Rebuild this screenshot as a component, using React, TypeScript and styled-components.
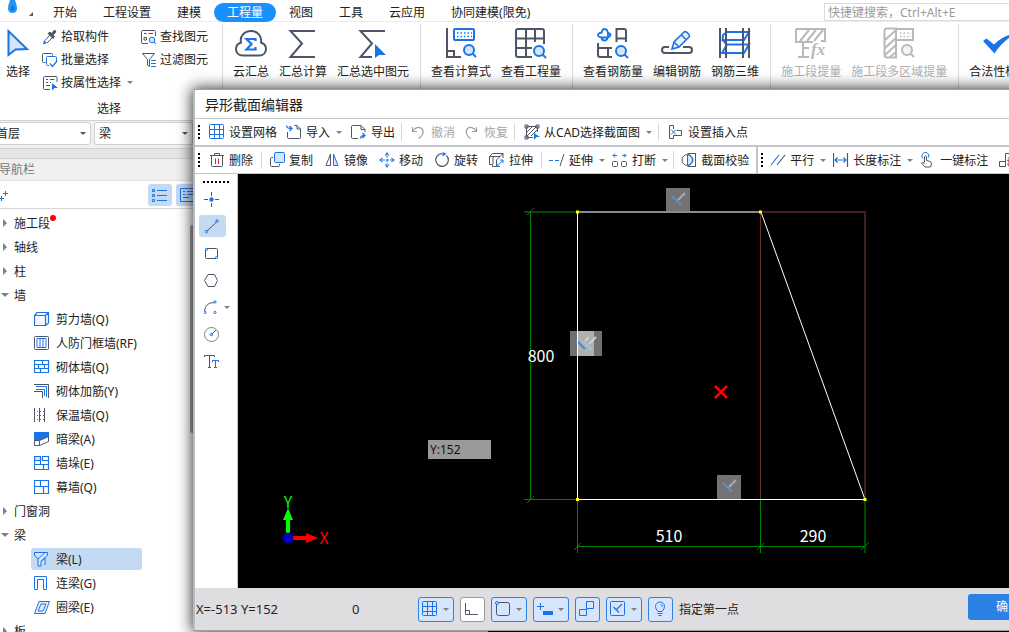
import React from "react";
import styled, { createGlobalStyle, css } from "styled-components";

const DARK = "#4d5566";
const BLUE = "#1a73e8";
const PALE = "#d6e5fb";
const MUTED = "#b9b9b9";
const LINE = "#c3c6cb";

const Global = createGlobalStyle`
  * { box-sizing: border-box; }
  html, body { margin: 0; padding: 0; overflow: hidden; }
  body {
    font-family: "Noto Sans", "Noto Sans CJK SC", sans-serif;
    font-size: 12px;
    line-height: 16px;
    color: #222;
  }
  button, input, select { font: inherit; color: inherit; }
  button { margin: 0; padding: 0; border: 0; background: none; white-space: nowrap; cursor: pointer; }
  ul { margin: 0; padding: 0; list-style: none; }
`;

/* ---------- shell ---------- */

const Shell = styled.div`
  position: relative;
  display: flex;
  flex-direction: column;
  width: 100%;
  min-width: 1064px;
  height: 100vh;
  overflow: hidden;
  background: #fff;
`;

const Label = styled.span`
  padding-top: 2px;
`;

const MenuBar = styled.header`
  display: flex;
  align-items: center;
  flex: none;
  height: 22px;
  padding-top: 3px;
  border-bottom: 1px solid #ececec;
`;

const Logo = styled.div`
  align-self: flex-start;
  width: 40px;
  height: 18px;
  flex: none;
  margin-top: -3px;
`;

const MenuItem = styled.button<{ $active?: boolean }>`
  height: 19px;
  padding: 0 13px;
  border-radius: 10px;
  line-height: 19px;
  ${(p) => p.$active && css`background: #1890ff; color: #fff;`}
`;

const Search = styled.input`
  width: 236px;
  height: 18px;
  margin: 0 4px 0 auto;
  padding: 0 3px;
  border: 1px solid #dcdcdc;
  background: #fff;
  outline: none;
  &::placeholder { color: #9a9a9a; opacity: 1; }
`;

const Ribbon = styled.div`
  display: flex;
  flex: none;
  height: 98px;
  padding-top: 2px;
  overflow: hidden;
`;

const Group = styled.div`
  display: flex;
  align-items: flex-start;
  gap: 10px;
  flex: none;
  padding: 3px 11px 0 10px;
  border-right: 1px solid #dcdcdc;
  &:last-child { border-right: 0; }
`;

const BigTool = styled.button<{ $muted?: boolean }>`
  display: flex;
  flex-direction: column;
  align-items: center;
  gap: 5px;
  color: ${(p) => (p.$muted ? "#b0b0b0" : "inherit")};
`;

const SelectGroup = styled.div`
  display: flex;
  flex-direction: column;
  align-items: center;
  flex: none;
  width: 223px;
  padding: 1px 4px 0 0;
  border-right: 1px solid #dcdcdc;
`;

const SelectTools = styled.div`
  display: grid;
  grid-template-columns: 36px 99px 70px;
  width: 100%;
  padding-left: 6px;
`;

const PickTool = styled(BigTool)`
  align-items: flex-start;
  gap: 6px;
  padding-top: 1px;
`;

const Stack = styled.div`
  display: flex;
  flex-direction: column;
  align-items: flex-start;
`;

const SmallTool = styled.button`
  display: flex;
  align-items: center;
  gap: 3px;
  height: 23px;
`;

const Caption = styled.div`
  margin-top: 7px;
`;

const Caret = styled.span`
  width: 0;
  height: 0;
  margin-left: 3px;
  border: 3px solid transparent;
  border-top-color: #808080;
  border-bottom: 0;
`;

const Workspace = styled.div`
  display: flex;
  flex: 1;
  min-height: 0;
`;

const Sidebar = styled.aside`
  position: relative;
  display: flex;
  flex-direction: column;
  flex: none;
  width: 193px;
  overflow: hidden;
  background: #fff;
`;

const ListPane = styled.div`
  flex: none;
  width: 295px;
`;

const Backdrop = styled.div`
  flex: 1;
  background: #000;
`;

const Filters = styled.div`
  display: flex;
  align-items: flex-start;
  flex: none;
  gap: 3px;
  height: 29px;
  padding: 1px 0 4px;
  border-top: 1px solid #d2d2d2;
  border-bottom: 1px solid #d2d2d2;
  background: #f0f0f0;
`;

const Picker = styled.label<{ $width: number; $offset?: number }>`
  display: grid;
  align-items: center;
  flex: none;
  width: ${(p) => p.$width}px;
  margin-left: ${(p) => p.$offset || 0}px;
  & > * { grid-area: 1 / 1; }
  &::after {
    content: "";
    grid-area: 1 / 1;
    justify-self: end;
    margin-right: 5px;
    border: 3px solid transparent;
    border-top-color: #555;
    border-bottom: 0;
    pointer-events: none;
  }
`;

const PickerSelect = styled.select`
  appearance: none;
  width: 100%;
  height: 23px;
  padding: 0 12px 0 4px;
  border: 1px solid #d0d0d0;
  border-radius: 3px;
  background: #fff;
`;

const Band = styled.div`
  flex: none;
  height: 10px;
  border-bottom: 1px solid #d2d2d2;
  background: #e5e5e5;
`;

const PaneTitle = styled.h2`
  flex: none;
  height: 22px;
  margin: 0 0 0 -1px;
  border-bottom: 1px solid #e2e2e2;
  background: #f0f0f0;
  color: #777;
  font-size: 12px;
  font-weight: 400;
  line-height: 21px;
`;

const PaneTools = styled.div`
  display: flex;
  align-items: center;
  flex: none;
  gap: 4px;
  height: 28px;
  border-bottom: 1px solid #d8d8d8;
`;

const AddButton = styled.button`
  width: 16px;
  height: 16px;
  margin-right: auto;
`;

const ViewButton = styled.button`
  display: grid;
  place-items: center;
  flex: none;
  width: 24px;
  height: 22px;
  border-radius: 3px;
  background: #c3daf2;
  &:last-child { margin-right: -7px; }
`;

const Tree = styled.ul`
  padding-top: 2px;
`;

const Branch = styled.button`
  display: flex;
  align-items: center;
  height: 24px;
  padding-left: 3px;
`;

const Arrow = styled.span<{ $open?: boolean }>`
  width: 11px;
  &::before {
    content: "";
    display: block;
    width: 0;
    height: 0;
    border: 4px solid transparent;
    ${(p) =>
      p.$open
        ? css`border-width: 4px 4px 0; margin-left: -2px; border-top-color: #808080;`
        : css`border-width: 4px 0 4px 4px; border-left-color: #808080;`}
  }
`;

const Dot = styled.i`
  align-self: flex-start;
  width: 6px;
  height: 6px;
  margin-top: 4px;
  border-radius: 50%;
  background: #f00;
`;

const LeafItem = styled.li`
  display: flex;
  align-items: center;
  height: 24px;
  padding-left: 31px;
`;

const Leaf = styled.button<{ $active?: boolean }>`
  display: flex;
  align-items: center;
  gap: 6px;
  width: 111px;
  height: 22px;
  padding-left: 3px;
  border-radius: 3px;
  background: ${(p) => (p.$active ? "#c3daf2" : "transparent")};
`;

const Thumb = styled.div`
  position: absolute;
  top: 105px;
  right: 0;
  width: 3px;
  height: 208px;
  border-radius: 2px 0 0 2px;
  background: #a8a8a8;
`;

/* ---------- editor window ---------- */

const Dialog = styled.section`
  position: absolute;
  top: 89px;
  left: 193px;
  right: 4px;
  bottom: 1px;
  display: flex;
  flex-direction: column;
  border: 1px solid #9b9da1;
  border-left: 2px solid #b9bbc0;
  background: #fff;
  box-shadow: 0 0 14px 1px rgba(0, 0, 0, 0.8);
`;

const Title = styled.h1`
  flex: none;
  height: 29px;
  margin: 0;
  padding-left: 10px;
  border-bottom: 1px solid ${LINE};
  font-size: 14px;
  font-weight: 400;
  line-height: 29px;
`;

const Bar = styled.div<{ $height: number; $rule: number }>`
  display: flex;
  flex: none;
  height: ${(p) => p.$height}px;
  border-bottom: ${(p) => p.$rule}px solid ${LINE};
`;

const Segment = styled.div<{ $gap: number; $ruled?: boolean }>`
  display: flex;
  align-items: center;
  flex: none;
  gap: ${(p) => p.$gap}px;
  padding: 0 3px;
  ${(p) => p.$ruled && css`border-right: 2px solid ${LINE};`}
`;

const Grip = styled.span<{ $indent?: number }>`
  width: 2px;
  height: 14px;
  margin-right: ${(p) => p.$indent || 0}px;
  background: repeating-linear-gradient(#000 0 2px, transparent 2px 4px);
`;

const Tool = styled.button<{ $muted?: boolean; $pad?: number }>`
  display: flex;
  align-items: center;
  gap: 4px;
  height: 24px;
  padding-right: ${(p) => p.$pad || 0}px;
  color: ${(p) => (p.$muted ? "#a6a6a6" : "inherit")};
`;

const ToolCaret = styled(Caret)`
  margin-left: 2px;
  border-width: 3px 3px 0;
`;

const Sep = styled.span<{ $shift: number }>`
  width: 1px;
  height: 18px;
  margin-left: ${(p) => p.$shift}px;
  background: #d6d8db;
`;

const Body = styled.div`
  display: flex;
  flex: 1;
  min-height: 0;
`;

const Palette = styled.div`
  display: flex;
  flex-direction: column;
  flex: none;
  gap: 5px;
  width: 43px;
  padding: 7px 0 0 4px;
  border-right: 1px solid ${LINE};
`;

const PaletteGrip = styled.span`
  width: 26px;
  height: 2px;
  margin-left: 4px;
  background: repeating-linear-gradient(90deg, #000 0 2px, transparent 2px 4px);
`;

const PaletteTool = styled.button<{ $active?: boolean }>`
  display: flex;
  align-items: center;
  height: 22px;
  width: ${(p) => (p.$active ? 27 : 36)}px;
  padding-left: 5px;
  gap: 2px;
  border-radius: 3px;
  background: ${(p) => (p.$active ? "#c3daf2" : "transparent")};
`;

const Canvas = styled.div`
  position: relative;
  flex: 1;
  min-width: 0;
  overflow: hidden;
  background: #000;
`;

const Readout = styled.output`
  position: absolute;
  top: 266px;
  left: 190px;
  width: 63px;
  height: 19px;
  padding-left: 2px;
  background: #999;
  color: #111;
  line-height: 19px;
`;

const Drawing = styled.svg`
  display: block;
`;

const Status = styled.footer`
  display: flex;
  align-items: center;
  flex: none;
  gap: 6px;
  height: 42px;
  padding-right: 11px;
  background: #dedee0;
`;

const Coords = styled.span`
  width: 151px;
  padding-left: 1px;
  font-size: 13px;
`;

const Count = styled.span`
  width: 60px;
  font-size: 13px;
`;

const Toggle = styled.button<{ $off?: boolean; $menu?: boolean }>`
  display: flex;
  align-items: center;
  gap: 3px;
  flex: none;
  width: ${(p) => (p.$menu ? 36 : 25)}px;
  height: 25px;
  padding-left: 3px;
  border: 1px solid ${(p) => (p.$off ? "#9a9a9a" : "#2d82ea")};
  border-radius: 3px;
  background: ${(p) => (p.$off ? "#fff" : PALE)};
`;

const Confirm = styled.button`
  width: 80px;
  height: 26px;
  margin: 0 0 4px auto;
  border-radius: 3px;
  background: #2d80e4;
  color: #fff;
`;

/* ---------- icons ---------- */

const P = ({ d, c = DARK, w = 1, f = "none" }: { d: string; c?: string; w?: number; f?: string }) => (
  <path d={d} stroke={c} strokeWidth={w} fill={f} />
);

const IconSvg = styled.svg`
  display: block;
  flex: none;
`;

const Icon = ({ size = 16, children }: { size?: number; children: React.ReactNode }) => (
  <IconSvg width={size} height={size} viewBox={`0 0 ${size} ${size}`} fill="none" aria-hidden="true">
    {children}
  </IconSvg>
);

const Lens = ({ x, y, c = BLUE, f = PALE }: { x: number; y: number; c?: string; f?: string }) => (
  <>
    <circle cx={x} cy={y} r="5" stroke={c} strokeWidth="2" fill={f} />
    <path d={`M${x + 3.5} ${y + 3.5}l3.5 3.5`} stroke={c} strokeWidth="2" />
  </>
);

const big: Record<string, React.ReactNode> = {
  cloud: (
    <>
      <P d="M8 28.500C3.500 28.500 1 25.500 1 22C1 18.500 3 16.500 6 15.500C4.500 9 9.500 4 16 4C22.500 4 27 9 26 15.500C29 16.500 31 18.500 31 22C31 25.500 28.500 28.500 24 28.500Z" w={2} />
      <P d="M20.500 14V12H11.500L16.500 17L11.500 22.500H20.500V20" c={BLUE} w={2.2} />
    </>
  ),
  sum: <P d="M28 4H3.500L15 16.500L3.500 30H28" w={2} />,
  sumPick: (
    <>
      <P d="M28 4H3.500L15 16.500L3.500 30H15" w={2} />
      <path d="M18 17V31L22 28H29Z" fill={BLUE} />
    </>
  ),
  formula: (
    <>
      <P d="M2 1V30H16M2 24H9V30" w={2} />
      <rect x="9" y="2" width="20" height="11" rx="1" stroke={BLUE} strokeWidth="2" />
      <path d="M12 6H27M12 9.500H27" stroke={BLUE} strokeWidth="1.500" strokeDasharray="1.500 2" />
      <Lens x={24} y={23} />
    </>
  ),
  quantity: (
    <>
      <P d="M17 30H3Q1 30 1 28V4Q1 2 3 2H27Q29 2 29 4V17M11 2V30M20 2V15M1 11.500H29M1 21H17" w={2} />
      <Lens x={24} y={24} />
    </>
  ),
  rebar: (
    <>
      <P d="M4.500 6.500Q5 2 7.500 2Q11 2 11 8Q11 13.500 7.500 13.500Q5 13.500 4.500 11M5 5.500Q1 6 1 8Q1 10.500 7 10.500Q13 10.500 13.500 8Q13.500 6.500 11 6" c={BLUE} w={1.8} />
      <P d="M19.500 15V2H27Q29 2 29 4V15M19.500 11.500H29M1 16V28Q1 30 3 30H15M1 21H15M11 21V30" w={2} />
      <Lens x={24} y={24} />
    </>
  ),
  edit: (
    <>
      <P d="M8 20H4Q1 20 1 23T4 26H28Q31 26 31 23T28 20H22" w={2} />
      <P d="M11 22L13 15L23 5Q24.500 4 26 5.500L28 7.500Q29 9 28 10L18 20ZM20.500 8L25 12.500M13 15L18 20" c={BLUE} w={1.6} f="#eaf2fe" />
    </>
  ),
  solid: (
    <>
      <P d="M4 8L8 5H30L25 13H3.500ZM3.500 13L8 17.500H30L25 26H3L8 17.500" c={BLUE} w={2} />
      <P d="M1 1V31M7 1V31M24 1V31M30 1V31" w={2} />
    </>
  ),
  section: (
    <>
      <P d="M1 2H30V14H26M1 2V15H18M5 14L14 3M12 14L21 3M19 14L28 3M8 15V30M3 30H14M8 21H14" c={MUTED} w={2} />
      <text x="16" y="28" fontFamily="Liberation Serif" fontStyle="italic" fontWeight="700" fontSize="17" fill={MUTED}>fx</text>
    </>
  ),
  region: (
    <>
      <P d="M13 1.500H4Q1.500 1.500 1.500 4V28Q1.500 30.500 4 30.500H13ZM13 2H30V13H14M2 13L13 3M2 21L13 11M2 28L13 18M7 30L13 25" c={MUTED} w={2} />
      <path d="M17 6H28M17 9.500H28" stroke={MUTED} strokeWidth="1.500" strokeDasharray="1.500 2" />
      <Lens x={24} y={23} c={MUTED} f="#f4f4f4" />
    </>
  ),
  check: <path d="M0 14L3.500 11.500L11 17.500Q19 10 28 7.500L29 9Q18 16 11.500 26.500Z" fill={BLUE} />,
};

const small: Record<string, React.ReactNode> = {
  dropper: (
    <>
      <path d="M8 3L12.500 7.500L11 9.500L6 4.500ZM10 4L12 1.500Q14.500 1 13.500 3.500L11.500 5.500Z" fill={DARK} stroke={DARK} />
      <P d="M8 6L3 11.500M10.500 8.500L5 14" />
      <path d="M2 11L5 14L1 15.500Z" fill={BLUE} />
    </>
  ),
  batch: (
    <>
      <P d="M3.500 10.500H1.500Q0.500 10.500 0.500 9.500V2.500Q0.500 1.500 1.500 1.500H9.500Q10.500 1.500 10.500 2.500V3.500" />
      <P d="M14.500 9V5.500Q14.500 4.500 13.500 4.500H5.500Q4.500 4.500 4.500 5.500V12.500Q4.500 13.500 5.500 13.500H7" c={BLUE} />
      <P d="M8 11.500L10.500 14.500L15 9" c={BLUE} w={1.3} />
    </>
  ),
  attr: (
    <>
      <P d="M15 7V2.500Q15 1.500 14 1.500H2.500Q1.500 1.500 1.500 2.500V13.500Q1.500 14.500 2.500 14.500H8M4 4.500H6M8 4.500H12.500M4 7.500H6M8 7.500H9M4 10.500H8" />
      <path d="M10 8L16 13L12.500 13L10 15.500Z" fill={BLUE} />
    </>
  ),
  find: (
    <>
      <P d="M14.500 7V2.500Q14.500 1.500 13.500 1.500H1.500Q0.500 1.500 0.500 2.500V13.500Q0.500 14.500 1.500 14.500H7M3 4.500H5.500M7.500 4.500H12M3 8.500H5.500V11H3Z" />
      <circle cx="11" cy="11" r="2.800" stroke={BLUE} fill={PALE} />
      <P d="M13 13L15 15" c={BLUE} />
    </>
  ),
  filter: (
    <>
      <P d="M8.500 14.500L6.500 13V7.500L1.500 1.500H13.500L8.500 7.500Z" />
      <P d="M10 8.500H15M10 11.500H15M10 14.500H15" c={BLUE} />
    </>
  ),
  grid: (
    <>
      <rect x="0.500" y="0.500" width="14" height="14" rx="1" stroke={BLUE} />
      <P d="M5.500 0V15M10.500 0V15M0 5.500H15M0 10.500H15" c={BLUE} />
    </>
  ),
  importIn: (
    <>
      <P d="M8.500 1.500H11L14.500 5V13.500Q14.500 14.500 13.500 14.500H2.500Q1.500 14.500 1.500 13.500V8M11 1.500V5H14.500" />
      <P d="M0.500 1.500Q0.500 4.500 5.500 4.500M3.500 2L6 4.500L3.500 7" c={BLUE} w={1.3} />
    </>
  ),
  exportOut: (
    <>
      <P d="M7 14.500H1.500Q0.500 14.500 0.500 13.500V2.500Q0.500 1.500 1.500 1.500H10L14 5.500V8M10 1.500V5.500H14" />
      <P d="M9.500 14.500Q9.500 11.500 14 11.500M11.500 9L14 11.500L11.500 14" c={BLUE} w={1.3} />
    </>
  ),
  undo: <P d="M1.500 3V7.500H6M1.500 7.500C4 3 8 2.500 10.500 4.500C14 8 11.500 12 7.500 14.500" c="#a0a0a0" w={1.2} />,
  redo: <P d="M12.500 3V7.500H8M12.500 7.500C10 3 6 2.500 3.500 4.500C0.500 8 3 12 6.500 14.500" c="#a0a0a0" w={1.2} />,
  cad: (
    <>
      <P d="M2.500 2.500H13.500V8M2.500 2.500V13.500H9M1 1H4V4H1ZM12 1H15V4H12ZM1 12H4V15H1ZM3 8L8 3M3 12L12 3M7 12L13 6" />
      <path d="M10 9L16 13H12.500L10 16Z" fill={BLUE} />
    </>
  ),
  insert: (
    <>
      <P d="M5.500 5V1.500H1.500V14.500H5.500V11.500H13.500V6.500H9" />
      <P d="M3 5.500L8 10.500M8 5.500L3 10.500" c={BLUE} />
    </>
  ),
  trash: (
    <>
      <P d="M1 3.500H15M5.500 3V1.500H10.500V3M2.500 4V13.500Q2.500 14.500 3.500 14.500H12.500Q13.500 14.500 13.500 13.500V4" />
      <P d="M6.500 6.500V12M9.500 6.500V12" c="#e02020" />
    </>
  ),
  copy: (
    <>
      <P d="M4 5.500H2.500Q1.500 5.500 1.500 6.500V13.500Q1.500 14.500 2.500 14.500H9.500Q10.500 14.500 10.500 13.500V12" />
      <rect x="5.500" y="0.500" width="10" height="10" rx="1" stroke={BLUE} fill={PALE} />
    </>
  ),
  mirror: (
    <>
      <P d="M6.500 2V13.500H2Z" />
      <P d="M9.500 2V13.500H14Z" c={BLUE} f={PALE} />
    </>
  ),
  move: (
    <>
      <path d="M8 3V13M3 8H13" stroke={BLUE} strokeDasharray="3 1" />
      <path d="M8 0L10.500 3.500H5.500ZM8 16L10.500 12.500H5.500ZM0 8L3.500 5.500V10.500ZM16 8L12.500 5.500V10.500Z" fill={BLUE} />
      <path d="M8 2L9 3.500H7ZM8 14L9 12.500H7ZM2 8L3.500 7V9ZM14 8L12.500 7V9Z" fill="#fff" />
    </>
  ),
  rotate: (
    <>
      <P d="M12.500 3.500A6.300 6.300 0 1 1 8 1.700" w={1.2} />
      <path d="M8.500 0L12.500 1.700L8.500 4.500Z" fill={BLUE} />
    </>
  ),
  stretch: (
    <>
      <P d="M0.500 4.500L3.500 1.500H14L11 4.500H0.500V12.500H3.500V14.500H7.500V8L11 4.500M4 4.500V12M14 1.500V6" />
      <P d="M8 14.500L14 8M11 8H14V11M8 11.500V14.500H11" c={BLUE} />
    </>
  ),
  extend: (
    <>
      <P d="M0 8.500H4M6 8.500H10" c={BLUE} />
      <P d="M11 14L15 2" />
    </>
  ),
  breakIt: (
    <>
      <rect x="0.500" y="9.500" width="5" height="5" rx="1" stroke={DARK} />
      <rect x="9.500" y="9.500" width="5" height="5" rx="1" stroke={DARK} />
      <P d="M5 3.500H1M3 1.500L1 3.500L3 5.500M10 3.500H14M12 1.500L14 3.500L12 5.500" c={BLUE} />
    </>
  ),
  verify: (
    <>
      <P d="M6.500 1.500H14.500V14.500H6.500" />
      <circle cx="6.500" cy="8" r="5.500" stroke={DARK} fill="#fff" />
      <path d="M6.500 3A5 5 0 0 1 6.500 13Z" fill={PALE} stroke={BLUE} />
    </>
  ),
  parallel: (
    <>
      <P d="M1 13L9 3" c={BLUE} w={1.2} />
      <P d="M7 13L15 3" w={1.2} />
    </>
  ),
  measure: (
    <>
      <P d="M0.500 1V15M14.500 1V15" w={1.2} />
      <P d="M2 8H13M4.500 5.500L2 8L4.500 10.500M10.500 5.500L13 8L10.500 10.500" c={BLUE} w={1.2} />
    </>
  ),
  tap: (
    <>
      <P d="M3 6.500A3.500 3.500 0 1 1 8.500 5.500" c={BLUE} />
      <P d="M4.500 10.500V4.500Q5.500 3 6.500 4.500V8.500L10 9.500Q11.500 10 11.500 12L10.500 15H5L1.500 11Q2 9.500 4.500 11.500" />
    </>
  ),
  combine: (
    <>
      <P d="M0.500 9.500H6.500V14.500H0.500ZM6.500 9.500V1.500H14M10 5V14.500" />
      <P d="M8 8L13 11M8 12L13 14" c="#e02020" />
    </>
  ),
  point: (
    <>
      <P d="M7.500 1V5M7.500 12V16M0 8.500H4M11 8.500H15" />
      <circle cx="7.500" cy="8.500" r="2.200" fill={BLUE} />
    </>
  ),
  line: (
    <>
      <P d="M3 13L12.500 4" />
      <circle cx="2.500" cy="13.500" r="1.200" stroke={BLUE} />
      <circle cx="13" cy="3" r="1.200" stroke={BLUE} />
    </>
  ),
  rect: (
    <>
      <rect x="1.500" y="3.500" width="12" height="10" rx="1" stroke={DARK} />
      <circle cx="2.500" cy="4.500" r="1" stroke={BLUE} fill="#fff" />
      <circle cx="12.500" cy="12.500" r="1" stroke={BLUE} fill="#fff" />
    </>
  ),
  hexagon: <P d="M4 2.500H10.500L13.500 8.500L10.500 14.500H4L0.500 8.500Z" />,
  arc: (
    <>
      <P d="M0.500 12Q1.500 3.500 10 3.500" />
      <circle cx="1" cy="13.500" r="1.100" stroke={BLUE} />
      <circle cx="11" cy="3" r="1.100" stroke={BLUE} />
      <circle cx="11" cy="13.500" r="1.100" stroke={BLUE} />
    </>
  ),
  circle: (
    <>
      <circle cx="7.500" cy="8.500" r="7" stroke="#7b818d" />
      <P d="M7.500 8.500L12 4" />
      <circle cx="7.500" cy="8.500" r="1.200" stroke={BLUE} />
    </>
  ),
  type: (
    <>
      <P d="M0.500 4V2.500H10.500V4M5.500 2.500V14.500M4 14.500H7" />
      <P d="M8.500 9V7.500H14.500V9M11.500 7.500V14.500M10 14.500H13" c={BLUE} />
    </>
  ),
  wall: <P d="M0.500 4.500H11.500V14.500H0.500ZM0.500 4.500L3 1.500H14.500V12L11.500 14.500M11.500 4.500L14.500 1.500" c={BLUE} w={1.2} f="#f4f8ff" />,
  frame: (
    <>
      <rect x="0.500" y="1.500" width="14" height="13" rx="1" stroke={DARK} />
      <P d="M3 12.500V3.500H12V12.500ZM6 3.500V12.500M9 3.500V12.500" c={BLUE} />
    </>
  ),
  brick: <P d="M0.500 1.500H14.500V13.500H0.500ZM0.500 5.500H14.500M0.500 9.500H14.500M8.500 1.500V5.500M4.500 5.500V9.500M10.500 5.500V9.500M6.500 9.500V13.500" c={BLUE} w={1.2} />,
  ties: (
    <>
      <P d="M0 1.500H14.500V15M0 8.500H8.500V15" />
      <P d="M2 3.500H12.500V14M2 6.500H10.500V13" c={BLUE} />
    </>
  ),
  insulation: (
    <>
      <P d="M0.500 1V15M5.500 1V15M10.500 1V15" />
      <path d="M0 4.500H11M0 8.500H11M0 12.500H11" stroke={BLUE} strokeDasharray="1 2" />
    </>
  ),
  hiddenBeam: (
    <>
      <path d="M0 1H15V6L5 10H0Z" fill={BLUE} />
      <P d="M0.500 9.500H5.500V14.500H0.500ZM5.500 9.500L14.500 5.500V10.500L5.500 14.500" f="#fff" />
    </>
  ),
  pier: (
    <>
      <rect x="1" y="1" width="6" height="4" fill={PALE} />
      <P d="M0.500 1.500H6.500V5.500H0.500ZM8.500 1.500H14.500V5.500H8.500ZM0.500 5.500V14.500H14.500V5.500M0.500 9.500H14.500M6.500 5.500V9.500M9.500 9.500V14.500" c={BLUE} w={1.2} />
    </>
  ),
  curtain: <P d="M0.500 1.500H14.500V14.500H0.500ZM0.500 7.500H14.500M6.500 1.500V7.500M9.500 7.500V14.500" c={BLUE} w={1.2} />,
  beam: <P d="M0.500 1.500H13.500V4L7 10.500V15H4V8L0.500 4ZM4 8L11 1.500M7 10.500L11 7V14" c={BLUE} f="#d6e5fb" />,
  link: <P d="M0.500 14.500V1.500H12.500V14.500H9.500V4.500H3.500V14.500Z" c={BLUE} f="#f4f8ff" />,
  ring: <P d="M0.500 14.500L5 2.500H15.500L11 14.500ZM4 12L7 5H12L9 12Z" c={BLUE} f="#e6effc" />,
  list: (
    <>
      <P d="M5 3.500H15M5 8.500H15M5 13.500H15" c={BLUE} />
      <path d="M0.500 2.500H2.500V4.500H0.500ZM0.500 7.500H2.500V9.500H0.500ZM0.500 12.500H2.500V14.500H0.500Z" stroke={BLUE} />
    </>
  ),
  card: <P d="M0.500 1.500H15V14.500H0.500ZM3 4.500H5M7 4.500H14M3 7.500H5M7 7.500H14M3 10.500H9" c={BLUE} />,
  plus: <P d="M0 11.500H4M1.500 9V14M3 6.500H8M5.500 4V9" c={BLUE} />,
  ortho: <P d="M1.500 2V13.500H14M1.500 9.500H5.500V13.500" />,
  snap: (
    <>
      <rect x="1.500" y="1.500" width="13" height="13" rx="2" stroke={DARK} />
      <circle cx="2" cy="2" r="1.500" stroke={BLUE} fill={PALE} />
    </>
  ),
  input: (
    <>
      <P d="M0 5.500H7M3.500 2V9" c={BLUE} />
      <rect x="6" y="10" width="10" height="4" fill={BLUE} />
    </>
  ),
  blocks: <P d="M7.500 0.500H14.500V7.500H7.500ZM0.500 8.500H7.500V14.500H0.500ZM7.500 7.500V8.500" c={BLUE} />,
  constraint: (
    <>
      <rect x="0.500" y="0.500" width="14" height="14" rx="1" stroke={BLUE} />
      <P d="M3.500 6L9 11.500M6.500 8.500L12 3" c={BLUE} w={1.2} />
    </>
  ),
  bulb: <P d="M6 10.500Q3.500 8 3.500 5.500A4.500 4.500 0 0 1 12.500 5.500Q12.500 8 10 10.500ZM8.500 3.500Q10.500 4 10.500 6M5.500 12.500H10.500M6.500 14.500H9.500" c={BLUE} />,
};

const S = ({ name }: { name: string }) => <Icon>{small[name]}</Icon>;

/* ---------- data ---------- */

const menus = ["开始", "工程设置", "建模", "工程量", "视图", "工具", "云应用", "协同建模(限免)"];

const groups: { label: string; icon: string; muted?: boolean }[][] = [
  [
    { label: "云汇总", icon: "cloud" },
    { label: "汇总计算", icon: "sum" },
    { label: "汇总选中图元", icon: "sumPick" },
  ],
  [
    { label: "查看计算式", icon: "formula" },
    { label: "查看工程量", icon: "quantity" },
  ],
  [
    { label: "查看钢筋量", icon: "rebar" },
    { label: "编辑钢筋", icon: "edit" },
    { label: "钢筋三维", icon: "solid" },
  ],
  [
    { label: "施工段提量", icon: "section", muted: true },
    { label: "施工段多区域提量", icon: "region", muted: true },
  ],
  [{ label: "合法性检查", icon: "check" }],
];

type Node = { label: string; open?: boolean; dot?: boolean; items?: { label: string; icon: string; active?: boolean }[] };

const tree: Node[] = [
  { label: "施工段", dot: true },
  { label: "轴线" },
  { label: "柱" },
  {
    label: "墙",
    open: true,
    items: [
      { label: "剪力墙(Q)", icon: "wall" },
      { label: "人防门框墙(RF)", icon: "frame" },
      { label: "砌体墙(Q)", icon: "brick" },
      { label: "砌体加筋(Y)", icon: "ties" },
      { label: "保温墙(Q)", icon: "insulation" },
      { label: "暗梁(A)", icon: "hiddenBeam" },
      { label: "墙垛(E)", icon: "pier" },
      { label: "幕墙(Q)", icon: "curtain" },
    ],
  },
  { label: "门窗洞" },
  {
    label: "梁",
    open: true,
    items: [
      { label: "梁(L)", icon: "beam", active: true },
      { label: "连梁(G)", icon: "link" },
      { label: "圈梁(E)", icon: "ring" },
    ],
  },
  { label: "板" },
];

type ToolDef = { label?: string; icon: string; menu?: boolean; muted?: boolean } | number;

/* A number stands for a separator and its shift from the previous tool. */
const fileTools: ToolDef[] = [
  { label: "设置网格", icon: "grid" },
  { label: "导入", icon: "importIn", menu: true },
  { label: "导出", icon: "exportOut" },
  -3,
  { label: "撤消", icon: "undo", muted: true },
  { label: "恢复", icon: "redo", muted: true },
  -3,
  { label: "从CAD选择截面图", icon: "cad", menu: true },
  -3,
  { label: "设置插入点", icon: "insert" },
];

const editTools: ToolDef[] = [
  { label: "删除", icon: "trash" },
  -3,
  { label: "复制", icon: "copy" },
  { label: "镜像", icon: "mirror" },
  { label: "移动", icon: "move" },
  { label: "旋转", icon: "rotate" },
  { label: "拉伸", icon: "stretch" },
  -3,
  { label: "延伸", icon: "extend", menu: true },
  { label: "打断", icon: "breakIt", menu: true },
  -2,
  { label: "截面校验", icon: "verify" },
];

const dimTools: ToolDef[] = [
  { label: "平行", icon: "parallel", menu: true },
  { label: "长度标注", icon: "measure", menu: true },
  { label: "一键标注", icon: "tap" },
  { icon: "combine" },
];

const palette = ["point", "line", "rect", "hexagon", "arc", "circle", "type"];

const toggles = [
  { icon: "grid", menu: true, name: "网格" },
  { icon: "ortho", off: true, name: "正交" },
  { icon: "snap", menu: true, name: "捕捉" },
  { icon: "input", menu: true, name: "动态输入" },
  { icon: "blocks", name: "图块" },
  { icon: "constraint", menu: true, name: "约束" },
  { icon: "bulb", name: "提示" },
];

const Tools = ({ items, pad = 0 }: { items: ToolDef[]; pad?: number }) => (
  <>
    {items.map((t, i) =>
      typeof t === "number" ? (
        <Sep key={i} $shift={t} />
      ) : (
        <Tool key={i} $muted={t.muted} $pad={t.menu ? 0 : pad} aria-label={t.label || t.icon}>
          <S name={t.icon} />
          {t.label && <Label>{t.label}</Label>}
          {t.menu && <ToolCaret />}
        </Tool>
      )
    )}
  </>
);

const Badge = ({ x, y }: { x: number; y: number }) => (
  <g transform={`translate(${x} ${y})`}>
    <rect width="24" height="24" fill="#737373" />
    <path d="M12 12L19 5" stroke="#a8acb2" strokeWidth="2" />
    <path d="M6 8L15 17" stroke="#5b8fd0" strokeWidth="2" />
  </g>
);

const SectionDrawing = () => (
  <Drawing width="822" height="414" viewBox="0 0 822 414" fill="none" role="img" aria-label="截面">
    <path d="M286 38H339" stroke="#004a00" strokeWidth="2" />
    <path d="M627 326V379" stroke="#004a00" strokeWidth="2" />
    <path
      d="M292.500 38V325M286 325.500H339M339.500 326V379M522.500 326V379M339 372.500H627M289 41L296 34M289 329L296 322M336 376L343 369M519 376L526 369M623 376L631 368"
      stroke="#008000"
    />
    <path d="M522.500 38V325" stroke="#6b3030" />
    <path d="M523 38H627V325" stroke="#451e1e" strokeWidth="2" />
    <Badge x={428} y={14} />
    <Badge x={479} y={301} />
    <rect x="332" y="157" width="32" height="25" fill="#707070" />
    <rect x="339" y="157" width="17" height="25" fill="#b0b0b0" />
    <path d="M351 170L358 163M347 167L351 163" stroke="#d0d0d0" strokeWidth="2" />
    <path d="M338 166L347 175" stroke="#3f86dc" strokeWidth="2" />
    <path d="M345 167L354 176" stroke="#9ec3ee" strokeWidth="2" />
    <path d="M339 38H523" stroke="#8a8a8a" strokeWidth="2" />
    <path d="M339.500 38V325.500H627L523 38" stroke="#fff" />
    <path d="M338 36.500H341V39.500H338ZM521 36.500H524V39.500H521ZM338 324H341V327H338ZM625.500 324H628.500V327H625.500Z" fill="#ff0" />
    <path d="M477 212L489 224M489 212L477 224" stroke="#f00" strokeWidth="2.500" />
    <g fill="#fff" fontFamily="Noto Sans CJK SC" fontSize="16" textAnchor="middle">
      <text x="303" y="188">800</text>
      <text x="431" y="368">510</text>
      <text x="575" y="368">290</text>
    </g>
    <path d="M50 364V344" stroke="#0f0" strokeWidth="4" />
    <path d="M50 334L55 346H45Z" fill="#0f0" />
    <path d="M50 364H70" stroke="#f00" strokeWidth="4" />
    <path d="M80 364L68 359V369Z" fill="#f00" />
    <circle cx="50" cy="364" r="5.500" fill="#0000b8" />
    <g fontFamily="Noto Sans CJK SC" fontSize="16" textAnchor="middle">
      <text x="50" y="334" fill="#0f0">Y</text>
      <text x="86" y="370" fill="#f00">X</text>
    </g>
  </Drawing>
);

export default function App() {
  return (
    <Shell>
      <Global />
      <MenuBar>
        <Logo>
          <svg width="40" height="18" viewBox="0 0 40 18" aria-hidden="true">
            <path d="M10 0H15Q17 5 17 9Q16.500 13 12.500 13Q8.500 13 8 9Q8 5 10 0Z" fill="#2196f3" />
            <path d="M12.500 5Q15 8 14.500 10Q12.500 12 10.500 10Q10 8 12.500 5Z" fill="#1478dc" />
            <path d="M33 12V16H29Z" fill="#555" />
          </svg>
        </Logo>
        {menus.map((m) => (
          <MenuItem key={m} $active={m === "工程量"}>{m}</MenuItem>
        ))}
        <Search aria-label="快捷键搜索" placeholder="快捷键搜索，Ctrl+Alt+E" />
      </MenuBar>

      <Ribbon>
        <SelectGroup>
          <SelectTools>
            <PickTool>
              <Icon size={32}>
                <path d="M2.500 5V29L9.500 23.500L21 23Z" fill={PALE} stroke={BLUE} strokeWidth="2" />
              </Icon>
              选择
            </PickTool>
            <Stack>
              <SmallTool><S name="dropper" />拾取构件</SmallTool>
              <SmallTool><S name="batch" />批量选择</SmallTool>
              <SmallTool><S name="attr" />按属性选择<Caret /></SmallTool>
            </Stack>
            <Stack>
              <SmallTool><S name="find" />查找图元</SmallTool>
              <SmallTool><S name="filter" />过滤图元</SmallTool>
            </Stack>
          </SelectTools>
          <Caption>选择</Caption>
        </SelectGroup>
        {groups.map((g, i) => (
          <Group key={i}>
            {g.map((t) => (
              <BigTool key={t.label} $muted={t.muted}>
                <Icon size={32}>{big[t.icon]}</Icon>
                {t.label}
              </BigTool>
            ))}
          </Group>
        ))}
      </Ribbon>

      <Workspace>
        <Sidebar>
          <Filters>
            <Picker $width={100} $offset={-9}>
              <PickerSelect aria-label="楼层"><option>首层</option></PickerSelect>
            </Picker>
            <Picker $width={99}>
              <PickerSelect aria-label="构件类型"><option>梁</option></PickerSelect>
            </Picker>
          </Filters>
          <Band />
          <PaneTitle>导航栏</PaneTitle>
          <PaneTools>
            <AddButton aria-label="添加"><S name="plus" /></AddButton>
            <ViewButton aria-label="列表"><S name="list" /></ViewButton>
            <ViewButton aria-label="卡片"><S name="card" /></ViewButton>
          </PaneTools>
          <Tree>
            {tree.map((n) => (
              <li key={n.label}>
                <Branch>
                  <Arrow $open={n.open} />
                  <Label>{n.label}</Label>
                  {n.dot && <Dot />}
                </Branch>
                {n.items && (
                  <ul>
                    {n.items.map((l) => (
                      <LeafItem key={l.label}>
                        <Leaf $active={l.active}>
                          <S name={l.icon} />
                          <Label>{l.label}</Label>
                        </Leaf>
                      </LeafItem>
                    ))}
                  </ul>
                )}
              </li>
            ))}
          </Tree>
          <Thumb />
        </Sidebar>
        <ListPane />
        <Backdrop />
      </Workspace>

      <Dialog role="dialog" aria-labelledby="editor-title">
        <Title id="editor-title">异形截面编辑器</Title>
        <Bar $height={28} $rule={2}>
          <Segment $gap={9}>
            <Grip />
            <Tools items={fileTools} />
          </Segment>
        </Bar>
        <Bar $height={27} $rule={1}>
          <Segment $gap={7} $ruled>
            <Grip $indent={2} />
            <Tools items={editTools} pad={4} />
          </Segment>
          <Segment $gap={7}>
            <Grip />
            <Tools items={dimTools} pad={4} />
          </Segment>
        </Bar>
        <Body>
          <Palette>
            <PaletteGrip />
            {palette.map((p) => (
              <PaletteTool key={p} $active={p === "line"} aria-label={p}>
                <S name={p} />
                {p === "arc" && <ToolCaret />}
              </PaletteTool>
            ))}
          </Palette>
          <Canvas>
            <SectionDrawing />
            <Readout>Y:152</Readout>
          </Canvas>
        </Body>
        <Status>
          <Coords>X=-513 Y=152</Coords>
          <Count>0</Count>
          {toggles.map((t) => (
            <Toggle key={t.icon} $off={t.off} $menu={t.menu} aria-label={t.name}>
              <S name={t.icon} />
              {t.menu && <ToolCaret />}
            </Toggle>
          ))}
          <Label>指定第一点</Label>
          <Confirm>确定</Confirm>
        </Status>
      </Dialog>
    </Shell>
  );
}
